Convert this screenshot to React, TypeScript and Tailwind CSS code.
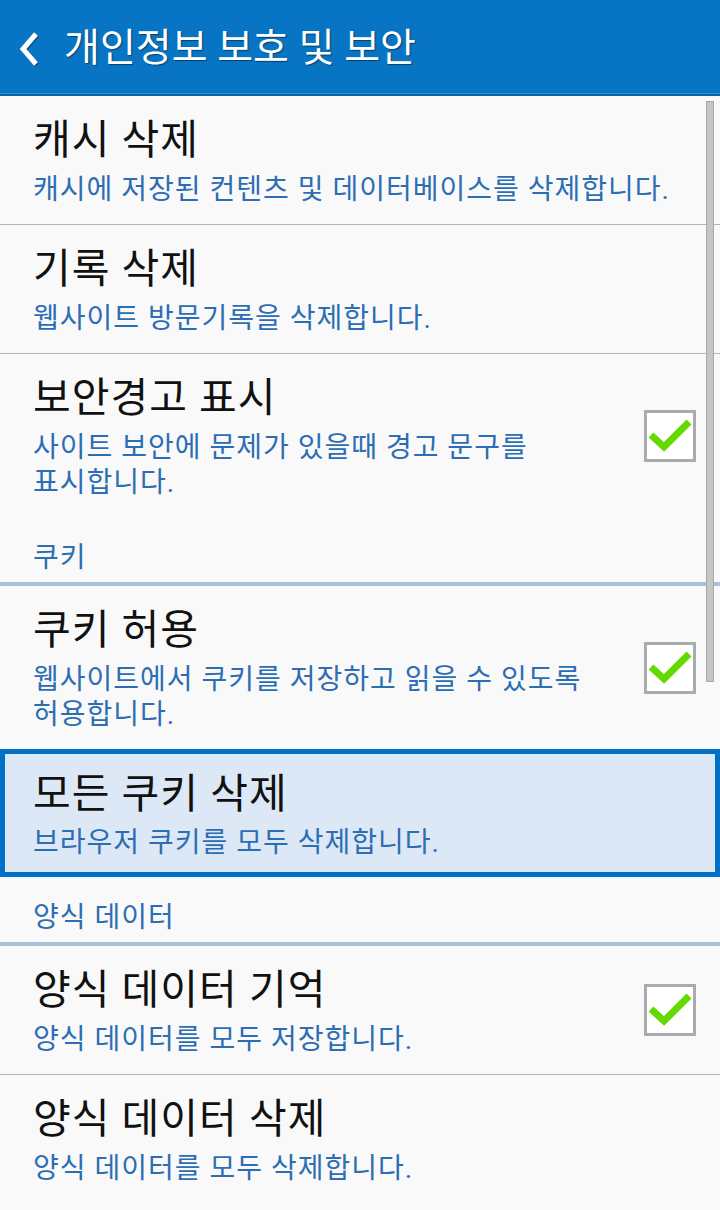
const FONT = "font-['Roboto','Noto_Sans_CJK_KR',sans-serif]"

type Item = {
    title: string
    desc: string
    checked?: boolean
    selected?: boolean
}

function Checkbox() {
    return (
        <div className="mr-6 flex h-[52px] w-[52px] shrink-0 items-center justify-center border-[3px] border-[#a9acaf] bg-white">
            <svg width="46" height="46" viewBox="0 0 46 46">
                <path d="M4 22 L17 34 L42 9" fill="none" stroke="#63d900" strokeWidth="7" strokeLinecap="butt" strokeLinejoin="miter" />
            </svg>
        </div>
    )
}

function Row({ item, last }: { item: Item; last?: boolean }) {
    if (item.selected) {
        return (
            <div className="flex items-center border-[5px] border-[#0070c9] bg-[#dce8f5] pb-[12px] pl-[28px] pt-[18px]">
                <div className="flex-1">
                    <div className="text-[41px] leading-[44px] tracking-[1px] text-[#111]">{item.title}</div>
                    <div className="mt-[9px] text-[28px] leading-[35px] tracking-[1px] text-[#2c6db3]">{item.desc}</div>
                </div>
            </div>
        )
    }
    return (
        <div className={`flex items-center ${last ? '' : 'border-b border-[#b3b4b7]'}`}>
            <div className="flex-1 pb-[17px] pl-[33px] pr-[40px] pt-[22px]">
                <div className="text-[41px] leading-[44px] tracking-[1px] text-[#111]">{item.title}</div>
                <div className="mt-[10px] break-keep text-[28px] leading-[35px] tracking-[1px] text-[#2c6db3]">{item.desc}</div>
            </div>
            {item.checked && <Checkbox />}
        </div>
    )
}

function Section({ label }: { label: string }) {
    return (
        <div className="border-b-4 border-[#a5c3dc] pb-[7px] pl-[33px] pt-[23px] text-[28px] leading-[35px] tracking-[1px] text-[#2c6db3]">
            {label}
        </div>
    )
}

export default function App() {
    return (
        <div className={`${FONT} relative h-[1210px] w-[720px] overflow-hidden bg-[#f9f9f9]`}>
            <div className="flex h-[93px] items-center bg-[#0874c4] pl-[18px] pt-[4px]">
                <svg width="24" height="36" viewBox="0 0 24 36" className="drop-shadow-[1px_1px_0_rgba(0,0,0,0.35)]">
                    <path d="M18 3 L5 18 L18 33" fill="none" stroke="#fff" strokeWidth="5" strokeLinecap="butt" strokeLinejoin="miter" />
                </svg>
                <h1 className="ml-[22px] text-[39px] leading-none text-white [text-shadow:1px_1px_1px_rgba(0,0,0,0.45)]">
                    개인정보 보호 및 보안
                </h1>
            </div>
            <div className="h-px bg-[#3b90d2]" />
            <div className="h-[2px] bg-[#0663aa]" />

            <Row item={{ title: '캐시 삭제', desc: '캐시에 저장된 컨텐츠 및 데이터베이스를 삭제합니다.' }} />
            <Row item={{ title: '기록 삭제', desc: '웹사이트 방문기록을 삭제합니다.' }} />
            <Row item={{ title: '보안경고 표시', desc: '사이트 보안에 문제가 있을때 경고 문구를 표시합니다.', checked: true }} last />

            <Section label="쿠키" />
            <Row item={{ title: '쿠키 허용', desc: '웹사이트에서 쿠키를 저장하고 읽을 수 있도록 허용합니다.', checked: true }} last />
            <Row item={{ title: '모든 쿠키 삭제', desc: '브라우저 쿠키를 모두 삭제합니다.', selected: true }} />

            <Section label="양식 데이터" />
            <Row item={{ title: '양식 데이터 기억', desc: '양식 데이터를 모두 저장합니다.', checked: true }} />
            <Row item={{ title: '양식 데이터 삭제', desc: '양식 데이터를 모두 삭제합니다.' }} last />

            {/* scroll thumb */}
            <div className="absolute left-[706px] top-[101px] h-[581px] w-[8px] border border-[#a7a7a7] bg-[#c5c5c5]" />
        </div>
    )
}
